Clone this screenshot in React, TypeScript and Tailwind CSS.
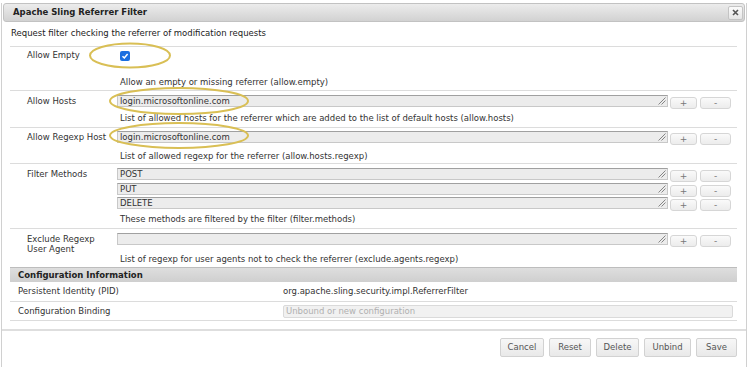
import React from 'react';

const ff = "font-['DejaVu_Sans',sans-serif]";

function Grip() {
  return (
    <svg width="8" height="8" viewBox="0 0 8 8" className="absolute right-[1px] bottom-[1px]">
      <path d="M7.5 0.5 L0.5 7.5 M7.5 3.5 L3.5 7.5" stroke="#7a7a7a" strokeWidth="0.9" fill="none" />
    </svg>
  );
}

function SmallBtn({ label, w }: { label: string; w: string }) {
  return (
    <div
      className={`${w} mt-[2px] h-[12px] rounded-[3px] border border-[#d6d6d6] bg-gradient-to-b from-[#fafafa] to-[#ececec] text-[9px] leading-[10px] text-[#777] flex items-center justify-center`}
    >
      {label}
    </div>
  );
}

function ValueLine({ value, className = '' }: { value?: string; className?: string }) {
  return (
    <div className={`flex items-start ${className}`}>
      <div className="relative w-[551px] h-[12px] bg-[#ececec] border border-[#c8c8c8] border-t-[#a0a0a0] pl-[2px] text-[8.5px] leading-[10px] text-[#333]">
        {value}
        <Grip />
      </div>
      <div className="ml-[2px]">
        <SmallBtn label="+" w="w-[27px]" />
      </div>
      <div className="ml-[3px]">
        <SmallBtn label="-" w="w-[31px]" />
      </div>
    </div>
  );
}

function Row({
  h,
  labelPt,
  label,
  children,
}: {
  h: string;
  labelPt: string;
  label: React.ReactNode;
  children: React.ReactNode;
}) {
  return (
    <div className={`flex border-t border-[#dcdcdc] ${h}`}>
      <div className={`w-[107px] shrink-0 pl-[17px] ${labelPt} text-[8.5px] leading-[10px] text-[#333]`}>{label}</div>
      <div className="flex flex-col">{children}</div>
    </div>
  );
}

function Desc({ children, className = '' }: { children: React.ReactNode; className?: string }) {
  return <div className={`pl-[3px] text-[8.5px] leading-[10px] text-[#333] ${className}`}>{children}</div>;
}

function FooterBtn({ label, w }: { label: string; w: string }) {
  return (
    <div
      className={`${w} h-[19px] rounded-[2px] border border-[#d2d2d2] bg-gradient-to-b from-[#f7f7f7] to-[#e9e9e9] text-[8.5px] text-[#555] flex items-center justify-center`}
    >
      {label}
    </div>
  );
}

export default function App() {
  return (
    <div className={`relative w-[750px] h-[367px] bg-white overflow-hidden ${ff}`}>
      <div className="ml-[1px] w-[746px] h-[367px] border-x border-[#d0d0d0]">
        {/* title bar */}
        <div className="mx-[1px] mt-[3px] h-[19px] rounded-[3px] border border-[#c2c2c2] bg-gradient-to-b from-[#ececec] to-[#d2d2d2] flex items-center justify-between pl-[9px] pr-[1px]">
          <span className="text-[8.5px] font-bold text-[#222]">Apache Sling Referrer Filter</span>
          <div className="w-[15px] h-[14px] rounded-[2px] border border-[#c4c4c4] bg-gradient-to-b from-[#fbfbfb] to-[#e6e6e6] flex items-center justify-center">
            <svg width="7" height="7" viewBox="0 0 7 7">
              <path d="M1 1 L6 6 M6 1 L1 6" stroke="#555" strokeWidth="1.6" />
            </svg>
          </div>
        </div>

        <div className="pl-[8px] pr-[9px]">
          <div className="pt-[6px] pl-[1px] h-[24px] text-[8.5px] leading-[10px] text-[#222]">
            Request filter checking the referrer of modification requests
          </div>

          <Row h="h-[44px]" labelPt="pt-[3px]" label="Allow Empty">
            <div className="ml-[3px] mt-[4px] w-[10px] h-[10px] rounded-[2px] bg-[#1b6fe0] flex items-center justify-center">
              <svg width="8" height="8" viewBox="0 0 8 8">
                <path d="M1.5 4.2 L3.3 6 L6.6 2" stroke="white" strokeWidth="1.5" fill="none" />
              </svg>
            </div>
            <Desc className="mt-[16px]">Allow an empty or missing referrer (allow.empty)</Desc>
          </Row>

          <Row h="h-[37px]" labelPt="pt-[5px]" label="Allow Hosts">
            <ValueLine value="login.microsoftonline.com" className="mt-[4px]" />
            <Desc className="mt-[4px]">
              List of allowed hosts for the referrer which are added to the list of default hosts (allow.hosts)
            </Desc>
          </Row>

          <Row h="h-[36px]" labelPt="pt-[4px]" label="Allow Regexp Host">
            <ValueLine value="login.microsoftonline.com" className="mt-[3px]" />
            <Desc className="mt-[6px]">List of allowed regexp for the referrer (allow.hosts.regexp)</Desc>
          </Row>

          <Row h="h-[65px]" labelPt="pt-[5px]" label="Filter Methods">
            <ValueLine value="POST" className="mt-[4px]" />
            <ValueLine value="PUT" className="mt-[0.5px]" />
            <ValueLine value="DELETE" className="mt-[0.5px]" />
            <Desc className="mt-[3px]">These methods are filtered by the filter (filter.methods)</Desc>
          </Row>

          <Row
            h="h-[38px]"
            labelPt="pt-[5px]"
            label={
              <>
                Exclude Regexp
                <br />
                User Agent
              </>
            }
          >
            <ValueLine className="mt-[4px]" />
            <Desc className="mt-[7px]">List of regexp for user agents not to check the referrer (exclude.agents.regexp)</Desc>
          </Row>

          {/* configuration information */}
          <div className="mt-[1px] h-[15px] border-t border-[#bdbdbd] bg-gradient-to-b from-[#dedede] to-[#cfcfcf] pl-[8px] text-[8.5px] leading-[14px] font-bold text-[#222]">
            Configuration Information
          </div>
          <div className="flex items-center h-[20px] border-b border-[#dcdcdc] text-[8.5px] text-[#333]">
            <div className="w-[273px] pl-[8px]">Persistent Identity (PID)</div>
            <div>org.apache.sling.security.impl.ReferrerFilter</div>
          </div>
          <div className="flex items-center h-[19px] border-b border-[#dcdcdc] text-[8.5px] text-[#333]">
            <div className="w-[273px] pl-[8px]">Configuration Binding</div>
            <div className="w-[450px] h-[13px] rounded-[2px] border border-[#dadada] bg-[#f1f1f1] pl-[2px] text-[8.5px] leading-[11px] text-[#b0b0b0]">
              Unbound or new configuration
            </div>
          </div>
        </div>

        {/* button pane */}
        <div className="mt-[8px] border-t-2 border-[#dedede] flex justify-end gap-[5px] pr-[9px] pt-[7px]">
          <FooterBtn label="Cancel" w="w-[44px]" />
          <FooterBtn label="Reset" w="w-[42px]" />
          <FooterBtn label="Delete" w="w-[43px]" />
          <FooterBtn label="Unbind" w="w-[47px]" />
          <FooterBtn label="Save" w="w-[41px]" />
        </div>
      </div>

      {/* annotation ellipses */}
      <svg className="absolute left-0 top-0 pointer-events-none" width="750" height="367">
        <ellipse cx="130" cy="55.5" rx="40" ry="12" fill="none" stroke="#d9bf55" strokeWidth="2" />
        <ellipse cx="179" cy="101" rx="69" ry="13" fill="none" stroke="#d9bf55" strokeWidth="2" />
        <ellipse cx="179" cy="135.5" rx="69" ry="12.5" fill="none" stroke="#d9bf55" strokeWidth="2" />
      </svg>
    </div>
  );
}
